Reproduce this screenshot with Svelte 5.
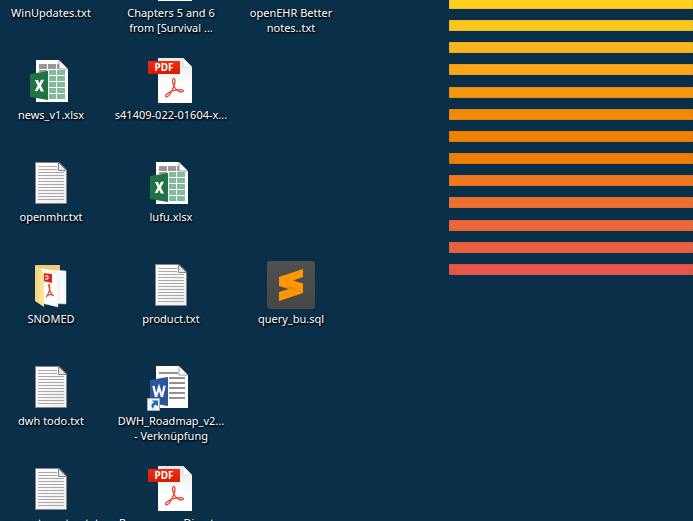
<script>
  const files = [
    { name: ['WinUpdates.txt'], kind: 'text' },
    { name: ['Chapters 5 and 6', 'from [Survival ...'], kind: 'pdf' },
    { name: ['openEHR Better', 'notes..txt'], kind: 'text' },
    { name: ['news_v1.xlsx'], kind: 'excel' },
    { name: ['s41409-022-01604-x...'], kind: 'pdf' },
    null,
    { name: ['openmhr.txt'], kind: 'text' },
    { name: ['lufu.xlsx'], kind: 'excel' },
    null,
    { name: ['SNOMED'], kind: 'folder' },
    { name: ['product.txt'], kind: 'text' },
    { name: ['query_bu.sql'], kind: 'sublime' },
    { name: ['dwh todo.txt'], kind: 'text' },
    { name: ['DWH_Roadmap_v2...', '- Verknüpfung'], kind: 'word' },
    null,
    { name: ['convert_contao.txt'], kind: 'text' },
    { name: ['Ressourcen_Direct...'], kind: 'pdf' },
    null
  ];
  const stripes = ['#ffd020', '#fbc61e', '#fab51c', '#fba518', '#f6980f', '#f18a07', '#f08104', '#ed7d05', '#f0771f', '#ec6f30', '#eb673a', '#e95f42', '#e55649'];
  const textRows = [4, 7, 10, 13, 16, 19, 22, 25, 28, 31, 34, 37];
</script>

<main>
  <ul class="icons">
    {#each files as file}
      <li>
        {#if file}
          <button type="button">
            <svg width="48" height="48" viewBox="0 0 48 48" aria-hidden="true">
              {#if file.kind === 'text'}
                <defs>
                  <linearGradient id="paper" x1="0" y1="0" x2="1" y2="1"><stop stop-color="#fff" /><stop offset="1" stop-color="#eee" /></linearGradient>
                </defs>
                <path d="M8.5 3.5H32L39.5 11V44.5H8.5Z" fill="url(#paper)" stroke="#858585" />
                {#each textRows as y}
                  <path d={`M11 ${y + 3.5}H${y < 10 ? 30 : 37}`} stroke="#aaa" />
                {/each}
                <path d="M31.5 3.5V11.5H39.5Z" fill="#e8e8e8" stroke="#858585" />
              {:else if file.kind === 'pdf'}
                <defs>
                  <linearGradient id="sheet" x2="0" y2="1"><stop stop-color="#e8e8e8" /><stop offset=".6" stop-color="#fff" /></linearGradient>
                  <linearGradient id="banner" x2="0" y2="1"><stop stop-color="#f22c0e" /><stop offset="1" stop-color="#d81c04" /></linearGradient>
                </defs>
                <path d="M11 1H36L45 10V46H11Z" fill="url(#sheet)" />
                <path d="M36 1V10H45Z" fill="#fff" stroke="#cfcfcf" stroke-width=".7" />
                <path d="M1 4H33V17H1Z" fill="url(#banner)" />
                <text x="17" y="14" text-anchor="middle" font-size="10" font-weight="700" fill="#fff">PDF</text>
                <path d="M26.5 21.5C24.8 22 25.6 26 27 29C28.6 32.5 31 34.6 34 35C37 35.3 37.4 32.4 33 32.6C28 32.8 22 35 19.4 37.4C17.4 39.4 19.4 41 22 38.4C25 34.5 28.5 27 28 23.4Q27.6 21.2 26.5 21.5" fill="none" stroke="#e0453a" stroke-width="1.3" />
              {:else if file.kind === 'excel' || file.kind === 'word'}
                <path d="M9 3H32L41 12V45H9Z" fill="#fff" />
                {#if file.kind === 'excel'}
                  <path d="M12 7H20V12H12ZM21 7H29V12H21ZM30 7H32V12H30ZM12 13H20V15H12Z" fill="#999" />
                  {#each [13, 19, 25, 31, 37] as y}
                    <path d={`M22 ${y}h7v5h-7zM30 ${y}h8v5h-8z`} fill="#83bc9d" />
                  {/each}
                  <path d="M3 17L21 14V43L3 40Z" fill="#217346" />
                  <path d="M8 23h3l1.4 3.3L14 22.8h3L14 28.5l3 5.9h-3.2l-1.7-3.7-1.6 3.4H7.7l2.9-5.5Z" fill="#fff" />
                {:else}
                  <path d="M12 10H31M22 15H38M22 20H38M22 25H38M22 30H38M22 35H38" stroke="#929292" stroke-width="2" />
                  <path d="M3 17L21 14V43L3 40Z" fill="#2b579a" />
                  <path d="M6.4 23L8.8 33H9.4L12 24.4L14.6 33H15.2L17.6 22.8" fill="none" stroke="#fff" stroke-width="2.2" />
                  <path d="M.5 35.5H12.5V47.5H.5Z" fill="#f5f5f5" stroke="#aaa" />
                  <path d="M5 37.5H11V43.5L8.9 41.4C7 42.4 6.2 43.8 6.4 46C3.4 43.6 4 41 7 39.5Z" fill="#176fc1" />
                {/if}
                <path d="M32 3V12H41Z" fill="#fff" stroke="#858585" stroke-width=".8" />
              {:else if file.kind === 'folder'}
                <defs>
                  <linearGradient id="flap"><stop stop-color="#f5d477" /><stop offset="1" stop-color="#ffe6a2" /></linearGradient>
                </defs>
                <path d="M9 4H33V36H9Z" fill="#edcc72" />
                <path d="M15 8L39 10V43L19 42Z" fill="#fafafa" stroke="#ddd" stroke-width=".5" />
                <path d="M14 7L26 10L31 13V46L14 42Z" fill="#fff" stroke="#d5d5d5" stroke-width=".5" />
                <path d="M16 12L25 13V22L16 20Z" fill="#dd2520" />
                <path d="M18 15h3v3h-3" stroke="#fff" fill="none" />
                <path d="M22 23C21 26 24 34 27 35C25 33 21 33 19 36C22 33 24 26 22 23" fill="none" stroke="#e04b42" stroke-width="1.2" />
                <path d="M8 4L17 11V46L8 40Z" fill="url(#flap)" />
              {:else}
                <defs>
                  <linearGradient id="tile" x2="0" y2="1"><stop stop-color="#505050" /><stop offset="1" stop-color="#474747" /></linearGradient>
                </defs>
                <rect width="48" height="48" rx="3" fill="url(#tile)" />
                <path d="M12 16L36 8V16L26 19.5L36 22.5V32L12 40V31L22 28L12 25Z" fill="#ff9800" />
                <path d="M16 26.2L22 28L36 32L25 25Z" fill="#ee8b00" />
              {/if}
            </svg>
            <span class="label">{#each file.name as line}<span>{line}</span>{/each}</span>
          </button>
        {/if}
      </li>
    {/each}
  </ul>
  <div class="stripes" aria-hidden="true">
    {#each stripes as color}
      <i style:background={color}></i>
    {/each}
  </div>
</main>

<style>
  :global(body) { margin: 0; background: #0a2f49; }
  main {
    display: flex;
    height: 100vh;
    overflow: hidden;
    background: #0a2f49;
    font-family: "Noto Sans", "Open Sans", sans-serif;
  }
  .icons {
    display: grid;
    flex: none;
    grid-template-columns: repeat(3, 120px);
    grid-auto-rows: 102px;
    margin: -45px 98px 0 -9px;
    padding: 0;
    list-style: none;
  }
  button {
    display: flex;
    flex-direction: column;
    align-items: center;
    width: 100%;
    padding: 0;
    border: 0;
    background: none;
    color: #fff;
    font: 11px/15px "Noto Sans", "Open Sans", sans-serif;
    white-space: nowrap;
    text-shadow: 1px 1px 2px #000, 0 1px 2px #000;
  }
  svg { display: block; overflow: visible; }
  svg text { text-shadow: none; }
  .label { display: block; margin-top: 2px; }
  .label span { display: block; }
  .stripes {
    display: flex;
    flex: 1;
    flex-direction: column;
    justify-content: space-between;
    height: 277px;
    margin-top: -2px;
  }
  i { height: 11px; box-shadow: inset 0 0 1px #705b3a; }
</style>
